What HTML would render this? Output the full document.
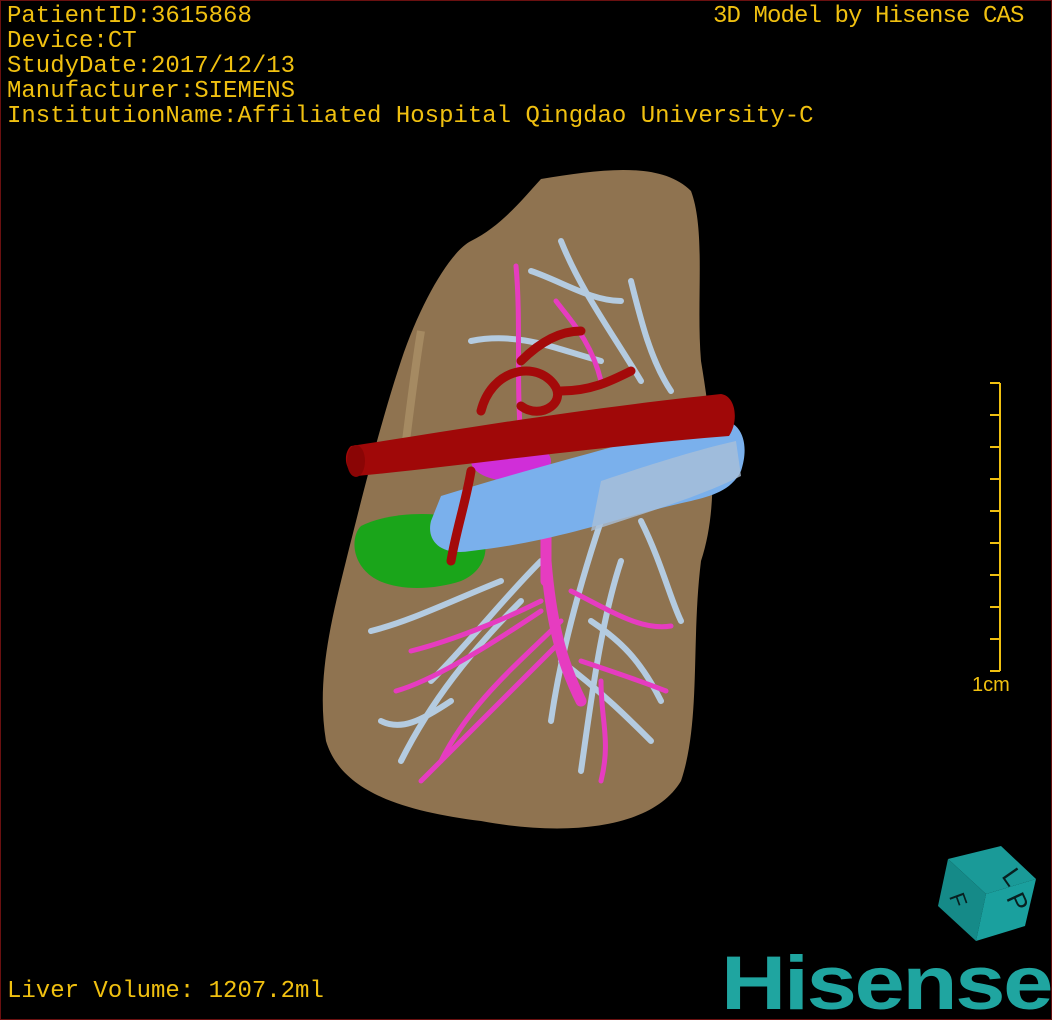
<!DOCTYPE html>
<html><head><meta charset="utf-8">
<style>
html,body{margin:0;padding:0;background:#000;}
.wrap{position:relative;width:1052px;height:1020px;background:#000;overflow:hidden;box-sizing:border-box;border:1px solid #6a1010;}
.t{position:absolute;color:#f0c010;font-family:"Liberation Mono","Noto Sans CJK SC",monospace;font-size:24px;line-height:25px;white-space:pre;}
</style></head><body>
<div class="wrap">
<svg width="1052" height="1020" style="position:absolute;left:0;top:0">
 <path d="M540,178 C600,168 660,160 690,190 C705,230 695,300 700,360 C710,420 720,500 700,560 C690,640 700,720 680,780 C650,830 560,835 480,820 C400,810 340,790 325,740 C315,680 330,620 345,560 C360,500 380,420 400,360 C420,300 450,250 470,240 C500,225 520,200 540,178 Z" fill="#8f7350"/>
 <path d="M420,330 C415,360 410,400 405,440" stroke="#a58a62" stroke-width="8" fill="none"/>
 <g stroke="#b4cbe0" stroke-width="6" fill="none" stroke-linecap="round">
  <path d="M560,240 C580,290 610,330 640,380"/>
  <path d="M530,270 C560,280 590,300 620,300"/>
  <path d="M470,340 C520,330 560,350 600,360"/>
  <path d="M630,280 C640,320 650,360 670,390"/>
  <path d="M600,520 C580,580 560,650 550,720"/>
  <path d="M620,560 C600,620 590,700 580,770"/>
  <path d="M540,560 C500,600 470,640 430,680"/>
  <path d="M520,600 C470,650 430,700 400,760"/>
  <path d="M640,520 C660,560 670,600 680,620"/>
  <path d="M500,580 C450,600 410,620 370,630"/>
  <path d="M560,660 C600,690 630,720 650,740"/>
  <path d="M450,700 C420,720 400,730 380,720"/>
  <path d="M590,620 C620,640 640,660 660,700"/>
 </g>
 <g stroke="#e63cc0" stroke-width="5" fill="none" stroke-linecap="round">
  <path d="M515,265 C520,320 515,380 520,440"/>
  <path d="M545,560 C550,620 560,660 580,700" stroke-width="11"/>
  <path d="M545,480 C545,520 545,550 545,580" stroke-width="11"/>
  <path d="M540,600 C500,620 450,640 410,650"/>
  <path d="M560,620 C520,660 470,700 440,760"/>
  <path d="M560,640 C520,680 480,720 420,780"/>
  <path d="M570,590 C610,610 640,630 670,625"/>
  <path d="M580,660 C610,670 640,680 665,690"/>
  <path d="M540,610 C480,650 430,680 395,690"/>
  <path d="M600,680 C600,720 610,740 600,780"/>
  <path d="M555,300 C570,320 590,340 600,380"/>
 </g>
 <ellipse cx="510" cy="460" rx="40" ry="20" fill="#d02ed8"/>
 <path d="M360,525 C390,510 440,510 470,520 C495,540 485,570 460,580 C430,590 390,590 370,575 C350,560 350,535 360,525 Z" fill="#1aa51a"/>
 <path d="M440,495 C520,470 620,445 700,420 C740,410 750,440 740,470 C730,490 710,495 690,500 C620,515 560,540 470,550 C440,555 425,540 430,520 Z" fill="#7ab0ec"/>
 <path d="M600,480 C630,470 690,450 735,440 L740,475 C700,495 650,510 590,530 Z" fill="#a9bfd8" opacity="0.8"/>
 <g stroke="#a40a0a" stroke-width="9" fill="none" stroke-linecap="round">
  <path d="M480,410 C490,370 530,360 550,380 C570,400 540,420 520,405"/>
  <path d="M520,360 C540,340 560,330 580,330"/>
  <path d="M560,390 C590,390 610,380 630,370"/>
  <path d="M470,470 C465,500 455,530 450,560"/>
 </g>
 <path d="M350,445 C450,430 560,410 720,393 C735,395 738,420 728,435 C600,445 460,465 356,475 C343,470 342,452 350,445 Z" fill="#a00808"/>
 <ellipse cx="355" cy="460" rx="9" ry="16" fill="#8a0505"/>
 <g stroke="#f0c010" stroke-width="2">
  <line x1="999" y1="382" x2="999" y2="670"/>
  <line x1="989" y1="382" x2="999" y2="382"/><line x1="989" y1="414" x2="999" y2="414"/>
  <line x1="989" y1="446" x2="999" y2="446"/><line x1="989" y1="478" x2="999" y2="478"/>
  <line x1="989" y1="510" x2="999" y2="510"/><line x1="989" y1="542" x2="999" y2="542"/>
  <line x1="989" y1="574" x2="999" y2="574"/><line x1="989" y1="606" x2="999" y2="606"/>
  <line x1="989" y1="638" x2="999" y2="638"/><line x1="989" y1="670" x2="999" y2="670"/>
 </g>
 <text x="971" y="690" font-family="Liberation Sans,sans-serif" font-size="20" fill="#f0c010">1cm</text>
 <polygon points="947,858 1000,845 1035,878 985,893" fill="#1a9a98"/>
 <polygon points="947,858 985,893 975,940 937,905" fill="#158a88"/>
 <polygon points="985,893 1035,878 1024,925 975,940" fill="#1aa09e"/>
 <text x="1000" y="875" font-family="Liberation Sans,sans-serif" font-size="26" fill="#082020" transform="rotate(55 1000 875)">L</text>
 <text x="990" y="900" font-family="Liberation Sans,sans-serif" font-size="26" fill="#082020" transform="rotate(65 1000 910)">P</text>
 <text x="948" y="905" font-family="Liberation Sans,sans-serif" font-size="22" fill="#082020" transform="rotate(70 955 900)">F</text>
 <text x="720" y="1008" font-family="Liberation Sans,sans-serif" font-size="76" font-weight="bold" fill="#1fa5a0" letter-spacing="-2" textLength="330" lengthAdjust="spacingAndGlyphs">Hisense</text>
</svg>
<div class="t" style="left:6px;top:3px">PatientID:3615868
Device:CT
StudyDate:2017/12/13
Manufacturer:SIEMENS
InstitutionName:Affiliated Hospital Qingdao University-C</div>
<div class="t" style="left:712px;top:3px;letter-spacing:-0.9px">3D Model by Hisense CAS</div>
<div class="t" style="left:6px;top:978px">Liver Volume: 1207.2ml</div>
</div>
</body></html>
